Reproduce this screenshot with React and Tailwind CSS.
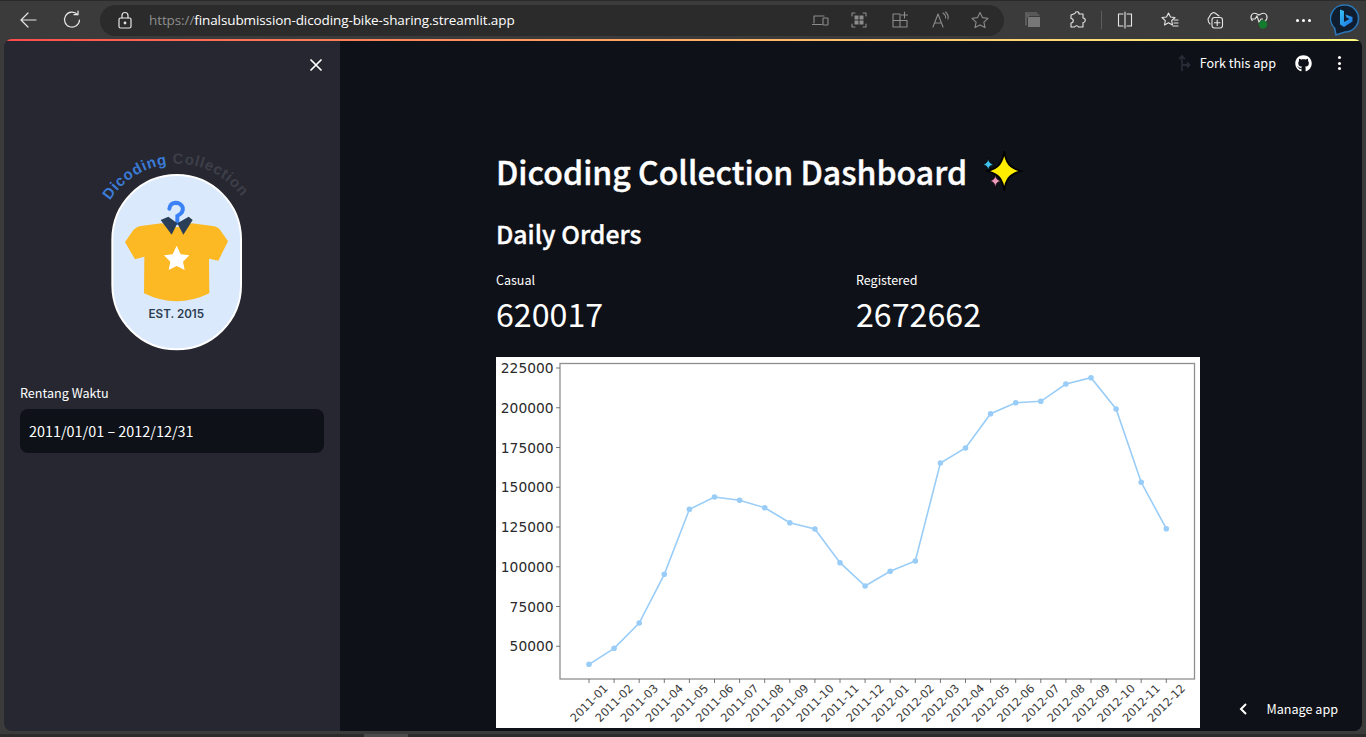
import React from "react";
import { FaGithub } from "react-icons/fa";

const S = { fontFamily: '"Noto Sans CJK JP","Noto Sans",sans-serif' };

const ys = [664.3, 648.3, 623, 574.3, 509.3, 497, 500.3, 507.7, 522.7, 529, 562.7, 586, 571.3, 561, 463, 448, 413.7, 402.7, 401.3, 384, 377.7, 409, 482.3, 528.7];
const labels = ["2011-01","2011-02","2011-03","2011-04","2011-05","2011-06","2011-07","2011-08","2011-09","2011-10","2011-11","2011-12","2012-01","2012-02","2012-03","2012-04","2012-05","2012-06","2012-07","2012-08","2012-09","2012-10","2012-11","2012-12"];
const yTicks = ["225000","200000","175000","150000","125000","100000","75000","50000"];

function Chart() {
  const px = (i) => 589 + i * 25.1 - 496;
  const py = (v) => v - 357;
  const pts = ys.map((v, i) => `${px(i)},${py(v)}`).join(" ");
  return (
    <svg width="704" height="371" viewBox="0 0 704 371" className="block bg-white">
      <rect x="64" y="6.5" width="634.5" height="315.5" fill="none" stroke="#8f8f8f" strokeWidth="1.3" />
      {yTicks.map((t, i) => {
        const y = 11 + i * 39.75;
        return (
          <g key={t}>
            <line x1="60" x2="64" y1={y} y2={y} stroke="#555" strokeWidth="0.8" />
            <text x="57.5" y={y} textAnchor="end" dominantBaseline="central" fontSize="13.8" fill="#2b2b2b" fontFamily='"DejaVu Sans",sans-serif'>{t}</text>
          </g>
        );
      })}
      {labels.map((t, i) => (
        <g key={t}>
          <line x1={px(i)} x2={px(i)} y1="322" y2="326" stroke="#555" strokeWidth="0.8" />
          <text x={px(i)} y="346" textAnchor="middle" dominantBaseline="central" fontSize="11.4" fill="#3a3a3a" fontFamily='"DejaVu Sans",sans-serif' transform={`rotate(-45 ${px(i)} 346)`}>{t}</text>
        </g>
      ))}
      <polyline points={pts} fill="none" stroke="#99cdf7" strokeWidth="1.6" />
      {ys.map((v, i) => <circle key={i} cx={px(i)} cy={py(v)} r="2.8" fill="#99cdf7" />)}
    </svg>
  );
}

function Logo() {
  return (
    <svg width="170" height="220" viewBox="0 0 510 660" className="block">
      <defs>
        <path id="logoArc" d="M60 182 A 238 238 0 0 1 468 192" />
      </defs>
      <text fontSize="45" fontWeight="700" letterSpacing="2.3" fontFamily='"Liberation Sans",sans-serif'>
        <textPath href="#logoArc">
          <tspan fill="#3b7bd8">Dicoding </tspan>
          <tspan fill="#3d3f49">Collection</tspan>
        </textPath>
      </text>
      <rect x="67" y="105" width="386" height="523" rx="193" fill="#dbe9fd" stroke="#ffffff" strokeWidth="6" />
      <path d="M215 250 L152 258 Q134 262 126 276 L105 306 L135 358 L163 350 L162 460 Q260 508 358 460 L357 356 L385 362 L414 304 L392 272 Q384 260 368 258 L305 250 L260 262 Z" fill="#fdb924" />
      <path d="M262 250 L262 228 Q282 218 278 202 Q272 188 256 188 Q240 190 238 206" fill="none" stroke="#3b82f6" strokeWidth="12" strokeLinecap="round" />
      <path d="M212 240 L235 230 L262 250 L245 284 Z" fill="#2a3f57" />
      <path d="M262 250 L296 230 L308 240 L280 284 Z" fill="#2a3f57" />
      <path d="M260 317 L272 343 L298 346 L279 365 L284 390 L260 378 L236 390 L241 365 L222 346 L248 343 Z" fill="#ffffff" />
      <text x="259" y="534" textAnchor="middle" fontSize="35" fontWeight="600" fill="#2c3e50" fontFamily='"Inter","Liberation Sans",sans-serif'>EST. 2015</text>
    </svg>
  );
}

function Sparkles() {
  return (
    <svg width="44" height="44" viewBox="0 0 40 40" className="block">
      <path d="M22 2 C23.5 13 27 17 37 20 C27 23 23.5 27 22 38 C20.5 27 17 23 7 20 C17 17 20.5 13 22 2 Z" fill="#ffee00" stroke="#000" strokeWidth="1.6" />
      <path d="M7.5 8 C8 12 9 13 12.5 14 C9 15 8 16 7.5 20 C7 16 6 15 2.5 14 C6 13 7 12 7.5 8 Z" fill="#3fc3ee" stroke="#000" strokeWidth="0.6" />
      <path d="M14 23 C14.5 27 15.5 28 19 29 C15.5 30 14.5 31 14 36 C13.5 31 12.5 30 9 29 C12.5 28 13.5 27 14 23 Z" fill="#ef9abb" stroke="#000" strokeWidth="0.6" />
    </svg>
  );
}

const Ic = ({ children, w = 20, c = "#e6e6e6", sw = 1.1, cls = "" }) => (
  <svg width={w} height="20" viewBox={`0 0 ${w} 20`} fill="none" stroke={c} strokeWidth={sw} strokeLinecap="round" strokeLinejoin="round" className={"block shrink-0 " + cls}>{children}</svg>
);

const dim = "#8c8c8c";

function Toolbar() {
  return (
    <div className="h-[39px] shrink-0 flex items-center bg-[#3b3b3b] border-t border-[#2a2a2a]">
      <Ic cls="ml-[18px]" sw={1.2}><path d="M3 10 H18 M3 10 L10 3 M3 10 L10 17" /></Ic>
      <Ic cls="ml-[24px]" sw={1.2}><path d="M15.5 4.5 A7.5 7.5 0 1 0 17.5 10" /><path d="M12 4.7 H16 V1" /></Ic>
      <div className="ml-[18px] w-[904px] h-[31px] rounded-full bg-[#2b2b2b] flex items-center">
        <Ic cls="ml-[15px]" sw={1.2}><rect x="4" y="8" width="12" height="10" rx="1.5" /><path d="M7 8 V5.5 A3 3 0 0 1 13 5.5 V8" /><circle cx="10" cy="13" r="0.8" fill="#e6e6e6" /></Ic>
        <div style={{ fontFamily: '"Open Sans",sans-serif' }} className="ml-[14px] w-[601px] text-[13.5px] leading-[20px] whitespace-nowrap tracking-[-0.1px]">
          <span className="text-[#8e8e8e]">https://</span><span className="text-white">finalsubmission-dicoding-bike-sharing.streamlit.app</span>
        </div>
        <Ic cls="ml-[60px]" c={dim}><path d="M4 13 V6 H14 M2.5 14.5 H12" /><rect x="13" y="8" width="5" height="7" rx="0.8" /></Ic>
        <Ic cls="ml-[19px]" c={dim}>
          <path d="M3 6 V3 H6 M14 3 H17 V6 M17 14 V17 H14 M6 17 H3 V14" />
          <g fill="#8c8c8c" stroke="none"><rect x="5.5" y="5.5" width="4" height="4" /><rect x="10.5" y="5.5" width="4" height="4" /><rect x="5.5" y="10.5" width="4" height="4" /><rect x="10.5" y="10.5" width="4" height="4" /></g>
        </Ic>
        <Ic cls="ml-[21px]" c={dim}><path d="M3 4 H10 V17 H3 Z M3 10.5 H17 V17 H10 M14.5 2 V8 M11.5 5 H17.5" /></Ic>
        <Ic cls="ml-[20px]" c={dim}><path d="M3 17 L8 4 L13 17 M5 13 H11 M13 3 Q16 5 15.5 8 M15.5 2 Q19 5 18 9" /></Ic>
        <Ic cls="ml-[20px]" c={dim}><path d="M10 2.5 L12.4 7.6 L18 8.3 L13.9 12.1 L15 17.6 L10 14.9 L5 17.6 L6.1 12.1 L2 8.3 L7.6 7.6 Z" /></Ic>
      </div>
      <Ic cls="ml-[19px]" c="#777">
        <path d="M3 3 H14 M4.5 5 H16" />
        <rect x="5" y="7" width="12" height="10" fill="#777" stroke="none" />
        <path d="M3 3 V15 M5 5 V7" />
      </Ic>
      <Ic cls="ml-[24px]"><path d="M8 3.5 A2 2 0 0 1 12 4 H16 V8 A2.2 2.2 0 0 1 16 12.5 V17 H11.5 A2.2 2.2 0 0 0 7.5 17 H4 V13 A2.2 2.2 0 0 0 4 8.5 V5 Z" /></Ic>
      <div className="ml-[14px] w-px h-[18px] bg-[#5c5c5c]" />
      <Ic cls="ml-[13px]"><path d="M8 4 H3.5 V16 H8 M12 4 H16.5 V16 H12 M10 2 V18" /></Ic>
      <Ic cls="ml-[25px]"><path d="M8.5 3 L10.5 7 L15 7.5 L11.7 10.6 L12.5 15 L8.5 12.8 L4.5 15 L5.3 10.6 L2 7.5 L6.5 7 Z" /><path d="M14 10 H18 M14 13 H18 M13 16 H18" /></Ic>
      <Ic cls="ml-[25px]"><path d="M5 14 Q3 12 3 9 L6 4 Q8 2 10 3 L14 6" /><rect x="7" y="7.5" width="10.5" height="10.5" rx="2.5" /><path d="M12.2 10 V15.5 M9.5 12.8 H15" /></Ic>
      <svg width="20" height="20" viewBox="0 0 20 20" fill="none" stroke="#e6e6e6" strokeWidth="1.1" className="block shrink-0 ml-[24px]">
        <path d="M3.5 11 Q1 8 2.5 5 Q5 1.5 10 5 Q15 1.5 17.5 5 Q19 8 16.5 11 L11 16" />
        <path d="M2 9 H6 L8 6 L10 12 L12 9 H14" />
        <circle cx="14" cy="14.5" r="4.2" fill="#137a2e" stroke="none" />
      </svg>
      <div className="ml-[24px] w-5 h-5 flex items-center justify-center gap-[3px]">
        <span className="w-[3px] h-[3px] rounded-full bg-white" /><span className="w-[3px] h-[3px] rounded-full bg-white" /><span className="w-[3px] h-[3px] rounded-full bg-white" />
      </div>
      <svg width="30" height="34" viewBox="0 0 30 34" className="block shrink-0 ml-[17px]">
        <defs>
          <linearGradient id="bingB" x1="0" y1="0" x2="1" y2="1"><stop offset="0" stopColor="#36c3f2" /><stop offset="1" stopColor="#1b6fe0" /></linearGradient>
        </defs>
        <path d="M15 2 A13.5 13.5 0 1 1 15 29 L6 32 L4.5 25 A13.5 13.5 0 0 1 15 2 Z" fill="#101d2e" stroke="#2a77b8" strokeWidth="1.6" />
        <path d="M10 6.5 L14 8 V19 L19.5 16 L16.5 14.5 L15.5 11.5 L22.5 14 V18.5 L14 24 L10 21.5 Z" fill="url(#bingB)" />
      </svg>
    </div>
  );
}

export default function App() {
  return (
    <div style={S} className="w-[1366px] h-[737px] overflow-hidden flex flex-col bg-[#3b3b3b] text-white">
      <Toolbar />
      <div className="px-[4px] h-[692px] shrink-0">
        <div className="h-full rounded-t-[8px] rounded-b-[8px] overflow-hidden flex flex-col">
          <div className="h-[2px] shrink-0 bg-gradient-to-r from-[#ff4b4b] to-[#fffd80]" />
          <div className="flex-1 min-h-0 flex">
            <aside className="w-[336px] shrink-0 bg-[#262730] pl-[16px] pr-[16px] flex flex-col">
              <div className="h-[48px] flex items-center justify-end shrink-0">
                <svg width="14" height="14" viewBox="0 0 14 14" stroke="#fff" strokeWidth="1.7" className="block mr-[1px]"><path d="M1.5 1.5 L12.5 12.5 M12.5 1.5 L1.5 12.5" /></svg>
              </div>
              <div className="mt-[51px] pl-[70px]"><Logo /></div>
              <label className="mt-[23px] block text-[12.6px] leading-[20px]">Rentang Waktu</label>
              <div className="mt-[6px] h-[44px] w-[304px] rounded-lg bg-[#0e1117] flex items-center pl-[9px] text-[14.4px]">2011/01/01 – 2012/12/31</div>
            </aside>
            <main className="relative flex-1 min-w-0 bg-[#0e1117] pl-[156px]">
              <div className="h-[44px] flex items-center justify-end -ml-[156px]">
                <svg width="16" height="20" viewBox="0 0 16 20" fill="none" stroke="#262b36" strokeWidth="1.8" className="block mr-[7px]"><path d="M5 18 V3 M2 6 L5 3 L8 6 M5 12 H12 M10 9.5 L12.5 12 L10 14.5" /></svg>
                <span className="text-[12.6px] leading-[20px] mr-[19px]">Fork this app</span>
                <FaGithub size={17} color="#fff" className="mr-[26px]" />
                <div className="flex flex-col gap-[2.5px] mr-[21px]">
                  <span className="w-[3px] h-[3px] rounded-full bg-white" /><span className="w-[3px] h-[3px] rounded-full bg-white" /><span className="w-[3px] h-[3px] rounded-full bg-white" />
                </div>
              </div>
              <div className="mt-[61px] flex items-center h-[50px] w-[704px]">
                <h1 className="text-[32px] leading-[50px] font-medium [-webkit-text-stroke:0.4px_white] whitespace-nowrap">Dicoding Collection Dashboard</h1>
                <div className="ml-[13px]"><Sparkles /></div>
              </div>
              <h2 className="mt-[17px] text-[24.8px] leading-[40px] font-medium [-webkit-text-stroke:0.35px_white] whitespace-nowrap">Daily Orders</h2>
              <div className="mt-[17px] flex h-[62px]">
                <div className="w-[360px]">
                  <div className="text-[12.5px] leading-[20px]">Casual</div>
                  <div className="text-[32.2px] leading-[46px]">620017</div>
                </div>
                <div>
                  <div className="text-[12.5px] leading-[20px]">Registered</div>
                  <div className="text-[32.2px] leading-[46px]">2672662</div>
                </div>
              </div>
              <div className="mt-[25px]"><Chart /></div>
              <div className="absolute right-[24px] bottom-[12px] flex items-center">
                <svg width="9" height="14" viewBox="0 0 9 14" fill="none" stroke="#fff" strokeWidth="2" className="block mr-[18px]"><path d="M7 2 L2 7 L7 12" /></svg>
                <span className="text-[12.6px] leading-[20px]">Manage app</span>
              </div>
            </main>
          </div>
        </div>
      </div>
      <div className="h-[3px] shrink-0 bg-[#3b3b3b]" />
      <div className="h-[3px] shrink-0 bg-[#2b2b2b] flex">
        <div className="ml-[364px] w-[44px] bg-[#4a4a4a]" />
      </div>
    </div>
  );
}
